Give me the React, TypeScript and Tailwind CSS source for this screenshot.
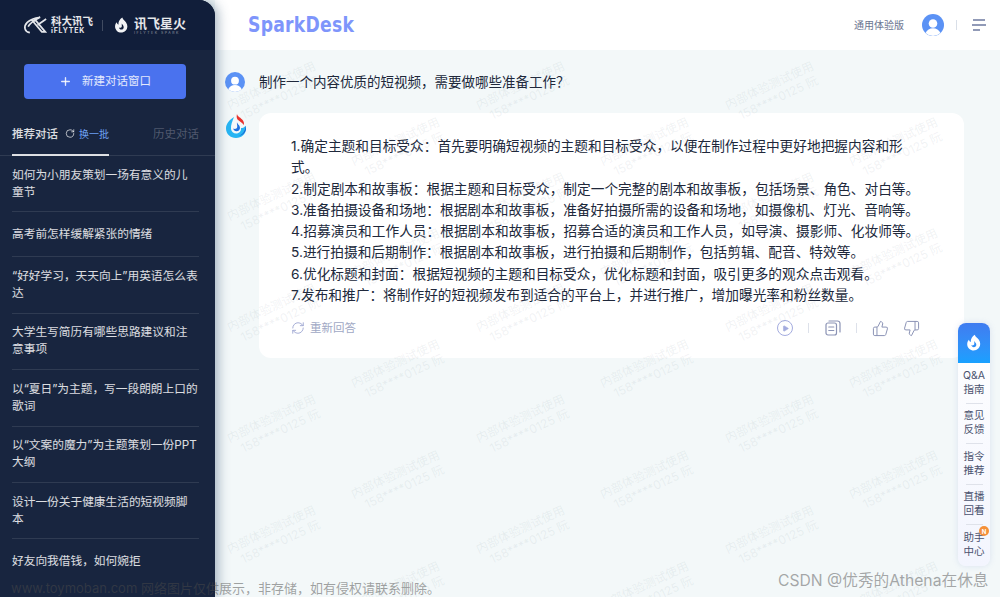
import { Plus, RefreshCw, RotateCw, Play, ThumbsUp, ThumbsDown } from "lucide-react";

const font = { fontFamily: '"Inter", "Noto Sans CJK SC", sans-serif' };

const topics = [
  "如何为小朋友策划一场有意义的儿童节",
  "高考前怎样缓解紧张的情绪",
  "“好好学习，天天向上”用英语怎么表达",
  "大学生写简历有哪些思路建议和注意事项",
  "以“夏日”为主题，写一段朗朗上口的歌词",
  "以“文案的魔力”为主题策划一份PPT大纲",
  "设计一份关于健康生活的短视频脚本",
  "好友向我借钱，如何婉拒",
];

const answer = [
  "1.确定主题和目标受众：首先要明确短视频的主题和目标受众，以便在制作过程中更好地把握内容和形式。",
  "2.制定剧本和故事板：根据主题和目标受众，制定一个完整的剧本和故事板，包括场景、角色、对白等。",
  "3.准备拍摄设备和场地：根据剧本和故事板，准备好拍摄所需的设备和场地，如摄像机、灯光、音响等。",
  "4.招募演员和工作人员：根据剧本和故事板，招募合适的演员和工作人员，如导演、摄影师、化妆师等。",
  "5.进行拍摄和后期制作：根据剧本和故事板，进行拍摄和后期制作，包括剪辑、配音、特效等。",
  "6.优化标题和封面：根据短视频的主题和目标受众，优化标题和封面，吸引更多的观众点击观看。",
  "7.发布和推广：将制作好的短视频发布到适合的平台上，并进行推广，增加曝光率和粉丝数量。",
];

const helpers = [
  ["Q&A", "指南"],
  ["意见", "反馈"],
  ["指令", "推荐"],
  ["直播", "回看"],
  ["助手", "中心"],
];

const Flame = ({ size = 20, color = "#fff", inner = "#2f8df5" }: { size?: number; color?: string; inner?: string }) => (
  <svg width={size} height={size} viewBox="0 0 24 24" fill="none">
    <path
      d="M13 2c.6 2.600 3 3.600 4.600 5.800 2.600 3.500 2.400 8-.4 10.800-3 3-8 3.100-11 .2-3-2.900-3.100-7.800-.3-10.800.4 1.500 1.100 2.300 2.200 2.900C7.900 7 10 3.800 13 2z"
      fill={color}
    />
    <path
      d="M12.500 9.500c.3 1.500 2.300 2.300 2.300 4.600 0 1.700-1.300 3-3 3-1.600 0-2.800-1.100-3-2.600 1.500.8 3 .3 3.500-1 .4-1.300-.3-2.500.2-4z"
      fill={inner}
    />
  </svg>
);

const SparkLogo = () => (
  <svg width="22" height="26" viewBox="0 0 22 26" fill="none">
    <path d="M12 1c.4 2.500 4 3.700 6 6.500 1 1.500 1.200 3 .8 4.500C17 9.500 14.500 8 12.500 6.500 11.500 5 11.500 3 12 1z" fill="#e8322d" />
    <path d="M9 4C4 7 1 11 1 15.500 1 21 5.400 25 11 25s10-4 10-9.500c0-1-.2-2-.5-2.800-1.500 2-3 2.300-4.500 2.300.5 3-1.800 5.500-4.800 5.500C8.500 20.500 6.300 18.500 6 16c-.4-4 1.500-8 3-12z" fill="#27b5f3" />
    <path d="M20.500 12.700C20.800 18 17 23 11 23.500c6-.2 10-4 10-8 0-1-.2-2-.5-2.800z" fill="#1d5fd0" />
    <path d="M12 9c0 2 3 3 3 6 0 2-1.800 3.300-3.500 3.300-1.600 0-3-1-3.200-2.700 1.800.8 3.500.2 3.900-1.300.4-1.700-.6-3.500-.2-5.300z" fill="#1d6fe0" />
  </svg>
);

const Avatar = ({ size }: { size: number }) => (
  <svg width={size} height={size} viewBox="0 0 22 22">
    <circle cx="11" cy="11" r="11" fill="#5b92f5" />
    <circle cx="11" cy="9.500" r="4.300" fill="#fff" />
    <path d="M3.500 19c1.500-3.200 4.200-4.800 7.500-4.800s6 1.600 7.500 4.800A11 11 0 0 1 11 22a11 11 0 0 1-7.500-3z" fill="#fff" />
  </svg>
);

const DocCopy = () => (
  <svg width="16" height="16" viewBox="0 0 16 16" fill="none" stroke="#8b93b5" strokeWidth="1.200" strokeLinecap="round">
    <rect x="1" y="3" width="10.500" height="12" rx="2" />
    <path d="M4 1h8.500A2.500 2.500 0 0 1 15 3.500V12M3.800 7h5M3.800 10.500h5" />
  </svg>
);

const Watermark = () => (
  <div className="w-[90px] -rotate-[25deg] text-[12px] leading-[15px] whitespace-nowrap text-[#8a99a8]/[0.13]">
    <div>内部体验测试使用</div>
    <div className="pl-2">158****0125 阮</div>
  </div>
);

const App = () => {
  return (
    <div className="relative flex h-[597px] w-[1000px] overflow-hidden bg-[#f3f8f9]" style={font}>
      <aside className="relative z-10 flex w-[215px] shrink-0 flex-col overflow-hidden rounded-tr-2xl bg-[#18253f] shadow-[3px_0_12px_rgba(60,90,120,0.45)]">
        <div className="flex h-[50px] shrink-0 items-center bg-[#111e3a] pl-[23px] text-white/90">
          <svg width="24" height="18" viewBox="0 0 28 20" fill="none" stroke="#e4e6ea" strokeWidth="2">
            <path d="M8 19C2 18 0 12 5 7c3-3 8-5 15-6-6 3-12 7-14 11" />
            <path d="M11 5l11 13h4L15 5zM27 3L17 10" />
          </svg>
          <div className="ml-[4px] flex flex-col items-start">
            <span className="text-[10.500px] leading-[11px] font-bold">科大讯飞</span>
            <span className="text-[7px] leading-[8px] font-bold tracking-[0.8px]">iFLYTEK</span>
          </div>
          <span className="ml-[9px] h-[11px] w-px bg-white/20" />
          <span className="ml-[9px]">
            <Flame size={19} color="#f2f3f5" inner="#111e3a" />
          </span>
          <div className="ml-[3px] flex flex-col items-start">
            <span className="text-[13px] leading-[15px] font-bold">讯飞星火</span>
            <span className="text-[3.500px] leading-[4px] tracking-[1.500px] text-white/50">IFLYTEK SPARK</span>
          </div>
        </div>

        <div className="shrink-0 px-6 pt-[14px]">
          <button className="flex h-[35px] w-[162px] items-center justify-center gap-[10px] rounded bg-[#4a72ee] text-[11.500px] text-white/85">
            <Plus size={13} strokeWidth={2.500} />
            新建对话窗口
          </button>
        </div>

        <div className="mt-[22px] flex h-[35px] shrink-0 items-start justify-between border-b border-white/10 px-3 text-[11.500px] leading-[26px] whitespace-nowrap">
          <div className="flex h-[35px] w-[97px] shrink-0 items-start border-b-2 border-white/85">
            <span className="font-medium text-white/85">推荐对话</span>
            <RotateCw size={11} className="mt-[7px] ml-[7px] text-white/80" />
            <span className="ml-[4px] text-[10px] text-[#6ea3f5]">换一批</span>
          </div>
          <span className="mr-[4px] text-white/25">历史对话</span>
        </div>

        <ul className="ml-3 flex w-[187px] flex-col">
          {topics.map((t) => (
            <li
              key={t}
              className="flex min-h-[45px] shrink-0 items-center border-b border-white/10 py-[10.700px] text-[11.700px] leading-[17px] text-white/85 last:border-b-0"
            >
              <span className="block max-w-[186px]">{t}</span>
            </li>
          ))}
        </ul>
      </aside>

      <main className="flex min-w-0 flex-1 flex-col">
        <header className="flex h-[50px] shrink-0 items-center justify-between bg-white pr-[14px] pl-[33px]">
          <span className="text-[21px] leading-none font-bold tracking-[0.3px] text-[#7e95fb]" style={{ fontFamily: '"DejaVu Sans", sans-serif' }}>
            <span className="inline-block origin-left scale-x-[0.82]">SparkDesk</span>
          </span>
          <div className="flex items-center">
            <span className="text-[10px] text-[#6b7590]">通用体验版</span>
            <span className="ml-[18px]">
              <Avatar size={22} />
            </span>
            <span className="ml-[12px] h-[10px] w-px bg-[#d9dfe8]" />
            <svg className="ml-[15px]" width="14" height="12" viewBox="0 0 14 12" stroke="#6d7aa0" strokeWidth="1.300">
              <path d="M1 1h12M0 6h14M1 11h7" />
            </svg>
          </div>
        </header>

        <div className="flex flex-col pl-[10px]">
          <div className="mt-[21px] flex h-[22px] items-center">
            <Avatar size={20} />
            <p className="ml-[14px] text-[13.500px] text-[#20283b]">制作一个内容优质的短视频，需要做哪些准备工作？</p>
          </div>

          <div className="mt-[20px] flex items-start">
            <SparkLogo />
            <div className="ml-[12px] h-[245px] w-[705px] rounded-xl bg-white pt-[23px] pr-[44px] pl-[32px]">
              <div className="text-[13.700px] leading-[21.300px] text-[#20283b]">
                {answer.map((l) => (
                  <p key={l}>{l}</p>
                ))}
              </div>
              <div className="mt-[14px] flex h-4 items-center justify-between">
                <div className="flex items-center gap-[5px] text-[11.500px] text-[#a0a8c4]">
                  <RefreshCw size={14} strokeWidth={1.500} className="text-[#9aa3d0]" />
                  重新回答
                </div>
                <div className="flex items-center text-[#8b93b5]">
                  <span className="flex h-4 w-4 items-center justify-center rounded-full border border-[#a4acdf] text-[#a4acdf]">
                    <Play size={7} fill="currentColor" />
                  </span>
                  <span className="ml-[15px] h-[10px] w-px bg-[#dde1ea]" />
                  <span className="ml-[16px]">
                    <DocCopy />
                  </span>
                  <span className="ml-[15px] h-[10px] w-px bg-[#dde1ea]" />
                  <ThumbsUp size={17} strokeWidth={1.400} className="ml-[15px]" />
                  <ThumbsDown size={17} strokeWidth={1.400} className="ml-[14px]" />
                </div>
              </div>
            </div>
          </div>
        </div>
      </main>

      <div className="absolute top-[323px] left-[958px] z-20 flex w-[32px] flex-col items-center overflow-hidden rounded-lg bg-gradient-to-b from-white to-[#f3f5fe] shadow-[0_0_6px_rgba(120,140,200,0.2)]">
        <div className="flex h-[40px] w-full items-center justify-center bg-gradient-to-b from-[#3f7cf0] to-[#18a0ff]">
          <Flame size={20} />
        </div>
        {helpers.map(([a, b], i) => (
          <div
            key={a}
            className={`flex h-[40.500px] w-[17px] flex-col items-center justify-center text-[10.500px] leading-[14px] text-[#4a526e] ${i < 4 ? "border-b border-[#dfe2ea]" : ""}`}
          >
            <span className="whitespace-nowrap">{a}</span>
            <span className="whitespace-nowrap">{b}</span>
          </div>
        ))}
      </div>
      <span className="absolute top-[526px] left-[979px] z-30 flex h-[10px] w-[10px] items-center justify-center rounded-full bg-[#f5903a] text-[6px] font-bold text-white">
        N
      </span>

      {/* watermark layer */}
      <div className="pointer-events-none absolute top-[77px] left-[232px] z-[15] flex flex-col">
        {[0, 1, 2, 3, 4, 5, 6, 7, 8, 9].map((row) => (
          <div key={row} className={`flex h-[55.500px] gap-[159px] ${row % 2 ? "pl-[124px]" : ""}`}>
            {[0, 1, 2].map((c) => (
              <Watermark key={c} />
            ))}
          </div>
        ))}
      </div>

      {/* image host captions */}
      <span className="pointer-events-none absolute top-[578px] left-[11px] z-40 text-[13px] leading-[20px] whitespace-nowrap text-[#4a4a4a]/50">
        www.toymoban.com 网络图片仅供展示，非存储，如有侵权请联系删除。
      </span>
      <span className="pointer-events-none absolute top-[570px] left-[778px] z-40 text-[15.700px] leading-[22px] whitespace-nowrap text-[#555]/50">
        CSDN @优秀的Athena在休息
      </span>
    </div>
  );
};

export default App;
